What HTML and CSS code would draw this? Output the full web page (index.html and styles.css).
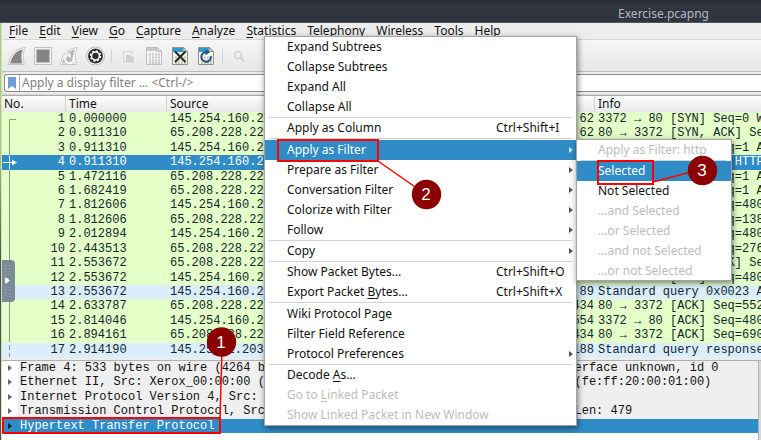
FILE: index.html
```html
<!DOCTYPE html>
<html lang="en">
<head>
<meta charset="utf-8">
<title>Exercise.pcapng</title>
<link rel="stylesheet" href="styles.css">
</head>
<body>
<div class="window">
  <header class="titlebar"><span class="titlebar-text">Exercise.pcapng</span></header>
  <nav class="menubar">
    <button><u>F</u>ile</button><button><u>E</u>dit</button><button><u>V</u>iew</button><button><u>G</u>o</button><button><u>C</u>apture</button><button><u>A</u>nalyze</button><button><u>S</u>tatistics</button><button>Telephon<u>y</u></button><button><u>W</u>ireless</button><button><u>T</u>ools</button><button><u>H</u>elp</button>
  </nav>
  <div class="toolbar">
    <button aria-label="Start capture"><svg width="20" height="20" viewBox="0 0 20 20"><path d="M1.5 18.5C3 9 8 2.500 18.500 1.500C15.500 7 15.500 12 17.500 18.500Z" fill="#fff" stroke="#c4c4c4"/><path d="M3 17.500C5 10 9 4.500 16 3.200C13.800 8 14 13 15.500 17.500Z" fill="#858585"/></svg></button>
    <button aria-label="Stop capture"><svg width="20" height="20" viewBox="0 0 20 20"><path d="M1.500 1.500h17v17h-17z" fill="#f4f4f4" stroke="#c0c0c0"/><path d="M3.500 3.500h13v13h-13z" fill="#858585"/></svg></button>
    <button aria-label="Restart capture"><svg width="20" height="20" viewBox="0 0 20 20"><path d="M1.500 18.500C3 9 8 2.500 18.500 1.500C15.500 7 15.500 12 17.500 18.500Z" fill="#fff" stroke="#c4c4c4"/><path d="M3 17.500C5 10 9 4.500 16 3.200C13.800 8 14 13 15.500 17.500Z" fill="#b6b6b6"/><path d="M8 9.500A4.200 4.200 0 1 0 14 11" fill="none" stroke="#fff" stroke-width="2"/><path d="M6.500 7.500h5v5z" fill="#fff"/></svg></button>
    <button aria-label="Capture options"><svg width="20" height="20" viewBox="0 0 20 20"><circle cx="10.500" cy="10" r="9" fill="#fff" stroke="#b5b5b5"/><circle cx="10.500" cy="10" r="7.500" fill="#2d2d2d"/><circle cx="10.500" cy="10" r="3.900" fill="none" stroke="#fff" stroke-width="1.500"/><circle cx="10.500" cy="10" r="5" fill="none" stroke="#fff" stroke-width="1.400" stroke-dasharray="2 1.927"/></svg></button>
    <i class="divider"></i>
    <button aria-label="Open file" disabled><svg width="20" height="20" viewBox="0 0 20 20"><path d="M14.500 8V5.500h-9v11H8" fill="none" stroke="#d3d3d3"/><path d="M8 9h4l1.500 1.500H16v6H8z" fill="#cfcfcf"/></svg></button>
    <button aria-label="Save file" disabled><svg width="20" height="20" viewBox="0 0 20 20"><path d="M2.500 1.500h11l4 4v13h-15z" fill="#f5f5f5" stroke="#bdbdbd"/><path d="M3 2h10v3H3z" fill="#c8c8c8"/><path d="M13 1.500v4h4.500z" fill="#e8e8e8" stroke="#bdbdbd"/><path d="M5 8.500h11M5 11.500h11M5 14.500h11M5 17h11" stroke="#c5c5c5" stroke-width="2" stroke-dasharray="2 1"/></svg></button>
    <button aria-label="Close file"><svg width="20" height="20" viewBox="0 0 20 20"><path d="M2.500 1.500h11l4 4v13h-15z" fill="#f7f7e3" stroke="#92928a"/><path d="M3 2h10v4H3z" fill="#319bd3"/><path d="M13 1.500v4h4.500z" fill="#d5dce0" stroke="#92928a"/><path d="M5 11.500h11M5 14.500h11M5 17h11" stroke="#c3c9ad" stroke-width="2" stroke-dasharray="2 1"/><path d="M5 5.500l10.500 10.500M15.500 5.500L5 16" stroke="#1c2a30" stroke-width="2"/></svg></button>
    <button aria-label="Reload file"><svg width="20" height="20" viewBox="0 0 20 20"><path d="M2.500 1.500h11l4 4v13h-15z" fill="#f7f7e3" stroke="#92928a"/><path d="M3 2h10v4H3z" fill="#319bd3"/><path d="M13 1.500v4h4.500z" fill="#d5dce0" stroke="#92928a"/><path d="M5 11.500h11M5 14.500h11M5 17h11" stroke="#c3c9ad" stroke-width="2" stroke-dasharray="2 1"/><path d="M10.500 6.200A4.800 4.800 0 1 0 14.800 10" fill="none" stroke="#27509a" stroke-width="2"/><path d="M9.500 3.200l4.500 3-4.500 3z" fill="#27509a"/></svg></button>
    <i class="divider"></i>
    <button aria-label="Find packet" disabled><svg width="20" height="20" viewBox="0 0 20 20"><circle cx="9" cy="9" r="3.500" fill="none" stroke="#d0d0d0" stroke-width="1.500"/><path d="M11.500 11.500l4 4" stroke="#d0d0d0" stroke-width="2"/></svg></button>
  </div>
  <div class="filterbar">
    <button class="bookmark" aria-label="Bookmark"><svg width="8" height="12" viewBox="0 0 8 12"><path d="M0 0h8v12L4 9 0 12z" fill="#6f9fd2"/></svg></button>
    <input type="text" aria-label="Display filter" placeholder="Apply a display filter … &lt;Ctrl-/&gt;">
  </div>
  <section class="packets">
    <table>
      <thead><tr><th>No.</th><th>Time</th><th>Source</th><th></th><th>Info</th></tr></thead>
      <tbody>
        <tr><td>1</td><td>0.000000</td><td>145.254.160.237</td><td>62</td><td>3372 → 80 [SYN] Seq=0 Win=8760</td></tr>
        <tr><td>2</td><td>0.911310</td><td>65.208.228.223</td><td>62</td><td>80 → 3372 [SYN, ACK] Seq=0</td></tr>
        <tr><td>3</td><td>0.911310</td><td>145.254.160.237</td><td>54</td><td>3372 → 80 [ACK] Seq=1 Ack=1</td></tr>
        <tr class="selected"><td>4</td><td>0.911310</td><td>145.254.160.237</td><td>533</td><td>GET /download.html HTTP/1.1</td></tr>
        <tr><td>5</td><td>1.472116</td><td>65.208.228.223</td><td>54</td><td>80 → 3372 [ACK] Seq=1 Ack=480</td></tr>
        <tr><td>6</td><td>1.682419</td><td>65.208.228.223</td><td>1434</td><td>80 → 3372 [ACK] Seq=1 Ack=480</td></tr>
        <tr><td>7</td><td>1.812606</td><td>145.254.160.237</td><td>54</td><td>3372 → 80 [ACK] Seq=480</td></tr>
        <tr><td>8</td><td>1.812606</td><td>65.208.228.223</td><td>1434</td><td>80 → 3372 [ACK] Seq=1381</td></tr>
        <tr><td>9</td><td>2.012894</td><td>145.254.160.237</td><td>54</td><td>3372 → 80 [ACK] Seq=480</td></tr>
        <tr><td>10</td><td>2.443513</td><td>65.208.228.223</td><td>1434</td><td>80 → 3372 [ACK] Seq=2761</td></tr>
        <tr><td>11</td><td>2.553672</td><td>65.208.228.223</td><td>1434</td><td>80 → 3372 [PSH, ACK] Seq=4141</td></tr>
        <tr><td>12</td><td>2.553672</td><td>145.254.160.237</td><td>54</td><td>3372 → 80 [ACK] Seq=480</td></tr>
        <tr class="dns"><td>13</td><td>2.553672</td><td>145.254.160.237</td><td>89</td><td>Standard query 0x0023 A</td></tr>
        <tr><td>14</td><td>2.633787</td><td>65.208.228.223</td><td>1434</td><td>80 → 3372 [ACK] Seq=5521</td></tr>
        <tr><td>15</td><td>2.814046</td><td>145.254.160.237</td><td>554</td><td>3372 → 80 [ACK] Seq=480</td></tr>
        <tr><td>16</td><td>2.894161</td><td>65.208.228.223</td><td>1434</td><td>80 → 3372 [ACK] Seq=6901</td></tr>
        <tr class="dns"><td>17</td><td>2.914190</td><td>145.253.2.203</td><td>188</td><td>Standard query response</td></tr>
      </tbody>
    </table>
    <svg class="track" width="18" height="245" viewBox="0 0 18 245"><path d="M14 7.500H7.500V225" fill="none" stroke="#8b9c85"/><path d="M7.500 225v20" stroke="#8b9c85" stroke-dasharray="5 3"/><path d="M7.500 43.500v14" stroke="#e8f3fa"/><path d="M1 50.500h10" stroke="#fff"/><path d="M10 47.500l5 3-5 3z" fill="#fff"/></svg>
    <button class="handle" aria-label="Show side panel"><svg width="13" height="42" viewBox="0 0 13 42"><path d="M3.500 5v32M7.500 5v10M7.500 27v10" stroke="#a5afb9" stroke-dasharray="1 2"/><path d="M3 18h2l3 2.500-3 2.500H3z" fill="#fff"/></svg></button>
  </section>
  <div class="splitter"></div>
  <ul class="details">
    <li>Frame 4: 533 bytes on wire (4264 bits), 533 bytes captured (4264 bits) on interface unknown, id 0</li>
    <li>Ethernet II, Src: Xerox_00:00:00 (00:00:01:00:00:00), Dst: fe:ff:20:00:01:00 (fe:ff:20:00:01:00)</li>
    <li>Internet Protocol Version 4, Src: 145.254.160.237, Dst: 65.208.228.223</li>
    <li>Transmission Control Protocol, Src Port: 3372, Dst Port: 80, Seq: 1, Ack: 1, Len: 479</li>
    <li class="selected">Hypertext Transfer Protocol</li>
  </ul>
</div>

<div class="menu context">
  <button>Expand Subtrees</button>
  <button>Collapse Subtrees</button>
  <button>Expand All</button>
  <button>Collapse All</button>
  <hr>
  <button>Apply as Column<kbd>Ctrl+Shift+I</kbd></button>
  <hr>
  <button class="more active">Apply as Filter</button>
  <button class="more">Prepare as Filter</button>
  <button class="more">Conversation Filter</button>
  <button class="more">Colorize with Filter</button>
  <button class="more">Follow</button>
  <hr>
  <button class="more">Copy</button>
  <hr>
  <button>Show Packet Bytes…<kbd>Ctrl+Shift+O</kbd></button>
  <button><span>Export Packet <u>B</u>ytes…</span><kbd>Ctrl+Shift+X</kbd></button>
  <hr>
  <button>Wiki Protocol Page</button>
  <button>Filter Field Reference</button>
  <button class="more">Protocol Preferences</button>
  <hr>
  <button><span>Decode <u>A</u>s…</span></button>
  <button disabled><span>Go to <u>L</u>inked Packet</span></button>
  <button disabled>Show Linked Packet in New Window</button>
</div>

<div class="menu submenu">
  <button disabled>Apply as Filter: http</button>
  <hr>
  <button class="active">Selected</button>
  <button>Not Selected</button>
  <button disabled>…and Selected</button>
  <button disabled>…or Selected</button>
  <button disabled>…and not Selected</button>
  <button disabled>…or not Selected</button>
</div>

<svg class="callouts" width="761" height="440" viewBox="0 0 761 440">
  <g fill="none" stroke="#f00" stroke-width="2">
    <path d="M278 140h100v21H278zM598 161h55v23h-55zM3 418h217v15H3z"/>
    <path d="M378 161l40 28M653 182l38-10M222 350l-2 68" stroke-width="1.500"/>
  </g>
  <g fill="#8b0000"><circle cx="221.500" cy="342" r="14.700"/><circle cx="426.500" cy="194.500" r="14.700"/><circle cx="702.500" cy="170.500" r="14.700"/></g>
  <g class="callout-number"><text x="221" y="348">1</text><text x="426" y="200">2</text><text x="702" y="176">3</text></g>
</svg>
</body>
</html>
```
FILE: styles.css
```css
* { box-sizing: border-box; }
body {
  margin: 0;
  min-height: 100vh;
  position: relative;
  overflow: hidden;
  background: #fff;
  color: #111;
  font: 12px/16px "Noto Sans", "Open Sans", sans-serif;
}
button {
  margin: 0; padding: 0; border: 0;
  background: none; color: inherit; font: inherit;
}
u { text-underline-offset: 2px; }

.window {
  height: 100vh;
  display: flex;
  flex-direction: column;
  padding-left: 2px;
  background: linear-gradient(90deg, transparent 1px, #d8d8d8 1px),
    linear-gradient(#a4d95c, #9fcf58 35%, #4a5532 60%, #4d5736);
}
.titlebar {
  flex: none;
  height: 23px;
  margin-left: -2px;
  padding: 5px 52px 0 0;
  background: linear-gradient(#2b2c38 3px, #2f343f 3px, #2f343f 22px, #55585f 22px);
  color: #b5bac4;
  text-align: right;
}
.titlebar-text { line-height: 17px; }
.menubar {
  flex: none;
  display: flex;
  gap: 11px;
  height: 17px;
  padding-left: 7px;
  background: #ededed;
  border-bottom: 1px solid #d6d6d6;
}
.toolbar {
  flex: none;
  display: flex;
  align-items: center;
  height: 32px;
  padding-left: 2px;
  background: linear-gradient(#f6f6f6, #e8e8e8);
  border-bottom: 1px solid #bcbcbc;
}
.toolbar button { width: 26px; height: 20px; }
.toolbar svg { display: block; margin: auto; }
.divider { width: 1px; height: 14px; margin: 0 3px; background: #d2d2d2; }
.filterbar {
  flex: none;
  display: flex;
  height: 18px;
  margin: 2px 0 3px 2px;
  background: #fff;
  border: 1px solid #8b8b8b;
  border-right: 0;
  border-radius: 3px 0 0 3px;
  box-shadow: 0 0 0 2px #ececec;
}
.bookmark {
  display: flex;
  align-items: center;
  padding: 0 3px;
  border-right: 1px solid #aaa;
}
.filterbar input {
  flex: 1;
  min-width: 0;
  padding: 0 2px;
  border: 0;
  background: none;
  font: inherit;
}
.filterbar input::placeholder { color: #808080; opacity: 1; }

.packets { flex: none; position: relative; }
table, thead, tbody { display: block; }
tr {
  display: grid;
  grid-template-columns: 64px 101px 328px 100px 1fr;
  min-height: 0;
}
thead tr {
  height: 17px;
  background: linear-gradient(#fdfdfd, #e9e9e9);
  border-top: 1px solid #a9a9a9;
}
th {
  padding: 0 3px;
  border-right: 1px solid #d0d0d0;
  font-weight: 400;
  text-align: left;
}
th:nth-child(3), th:last-child { border-right: 0; }
th:first-child { padding: 0 2px; }
tbody {
  display: grid;
  grid-template-rows: repeat(17, 1fr);
  height: 245px;
  background: #e4ffc7;
}
tbody tr, .details { font: 12px/15px "Liberation Mono", monospace; }
tbody tr { color: #12272e; }
td {
  padding: 0 3px;
  overflow: hidden;
  white-space: nowrap;
}
td:nth-child(1), td:nth-child(4) { padding: 0 1px; text-align: right; }
.dns { background: #daeeff; }
tr.selected { background: #308cc6; color: #fff; }
.track { position: absolute; left: 0; top: 17px; }
.handle {
  position: absolute;
  left: 0;
  top: 165px;
  width: 13px;
  height: 42px;
  background: #6f7f91e6;
  border-radius: 0 4px 4px 0;
}
.handle svg { display: block; }

.splitter {
  flex: none;
  height: 4px;
  background: #ececec;
  border-bottom: 1px solid #b0b0b0;
}
.details {
  flex: 1;
  min-height: 0;
  display: grid;
  grid-template-rows: repeat(5, 1fr);
  margin: 0 2px 0 0;
  padding: 0 0 7px;
  list-style: none;
  background: #fff;
  border-right: 1px solid #b0b0b0;
}
.details li {
  position: relative;
  min-height: 0;
  padding-left: 18px;
  white-space: nowrap;
  background: linear-gradient(90deg, #fff 16px, #efefef 16px);
}
.details li::before {
  content: "";
  position: absolute;
  left: 6px;
  top: 4px;
  border: 3px solid transparent;
  border-left: 4px solid #666;
  border-right: 0;
}
.details li.selected { background: #308cc6; color: #fff; }
.details li.selected::before { border-left-color: #123; }

.menu {
  position: absolute;
  display: flex;
  flex-direction: column;
  background: #fff;
  border: 1px solid #a2a2a2;
  box-shadow: 1px 2px 6px #00000080;
}
.context { left: 264px; top: 36px; width: 313px; height: 390px; }
.submenu { left: 576px; top: 139px; width: 156px; height: 142px; }
.menu button {
  flex: none;
  position: relative;
  display: flex;
  justify-content: space-between;
  height: 20px;
  padding: 2px 11px 2px 22px;
  white-space: nowrap;
}
.submenu button { padding-left: 21px; }
.menu button:disabled { color: #bcbcbc; }
.menu .active { background: #308cc6; color: #fff; }
.menu hr {
  flex: 1;
  width: calc(100% - 8px);
  margin: 0 4px;
  border: 0;
  border-top: 1px solid #d2d2d2;
}
.menu kbd { width: 69px; font: inherit; text-align: left; }
.more::after {
  content: "";
  position: absolute;
  right: 3px;
  top: 7px;
  border: 3px solid transparent;
  border-left: 4px solid #555;
  border-right: 0;
}
.more.active::after { border-left-color: #cfe3f1; }

.callouts { position: absolute; left: 0; top: 0; pointer-events: none; }
.callout-number {
  fill: #fff;
  font: 17px "Liberation Sans", Arial, sans-serif;
  text-anchor: middle;
}
```
